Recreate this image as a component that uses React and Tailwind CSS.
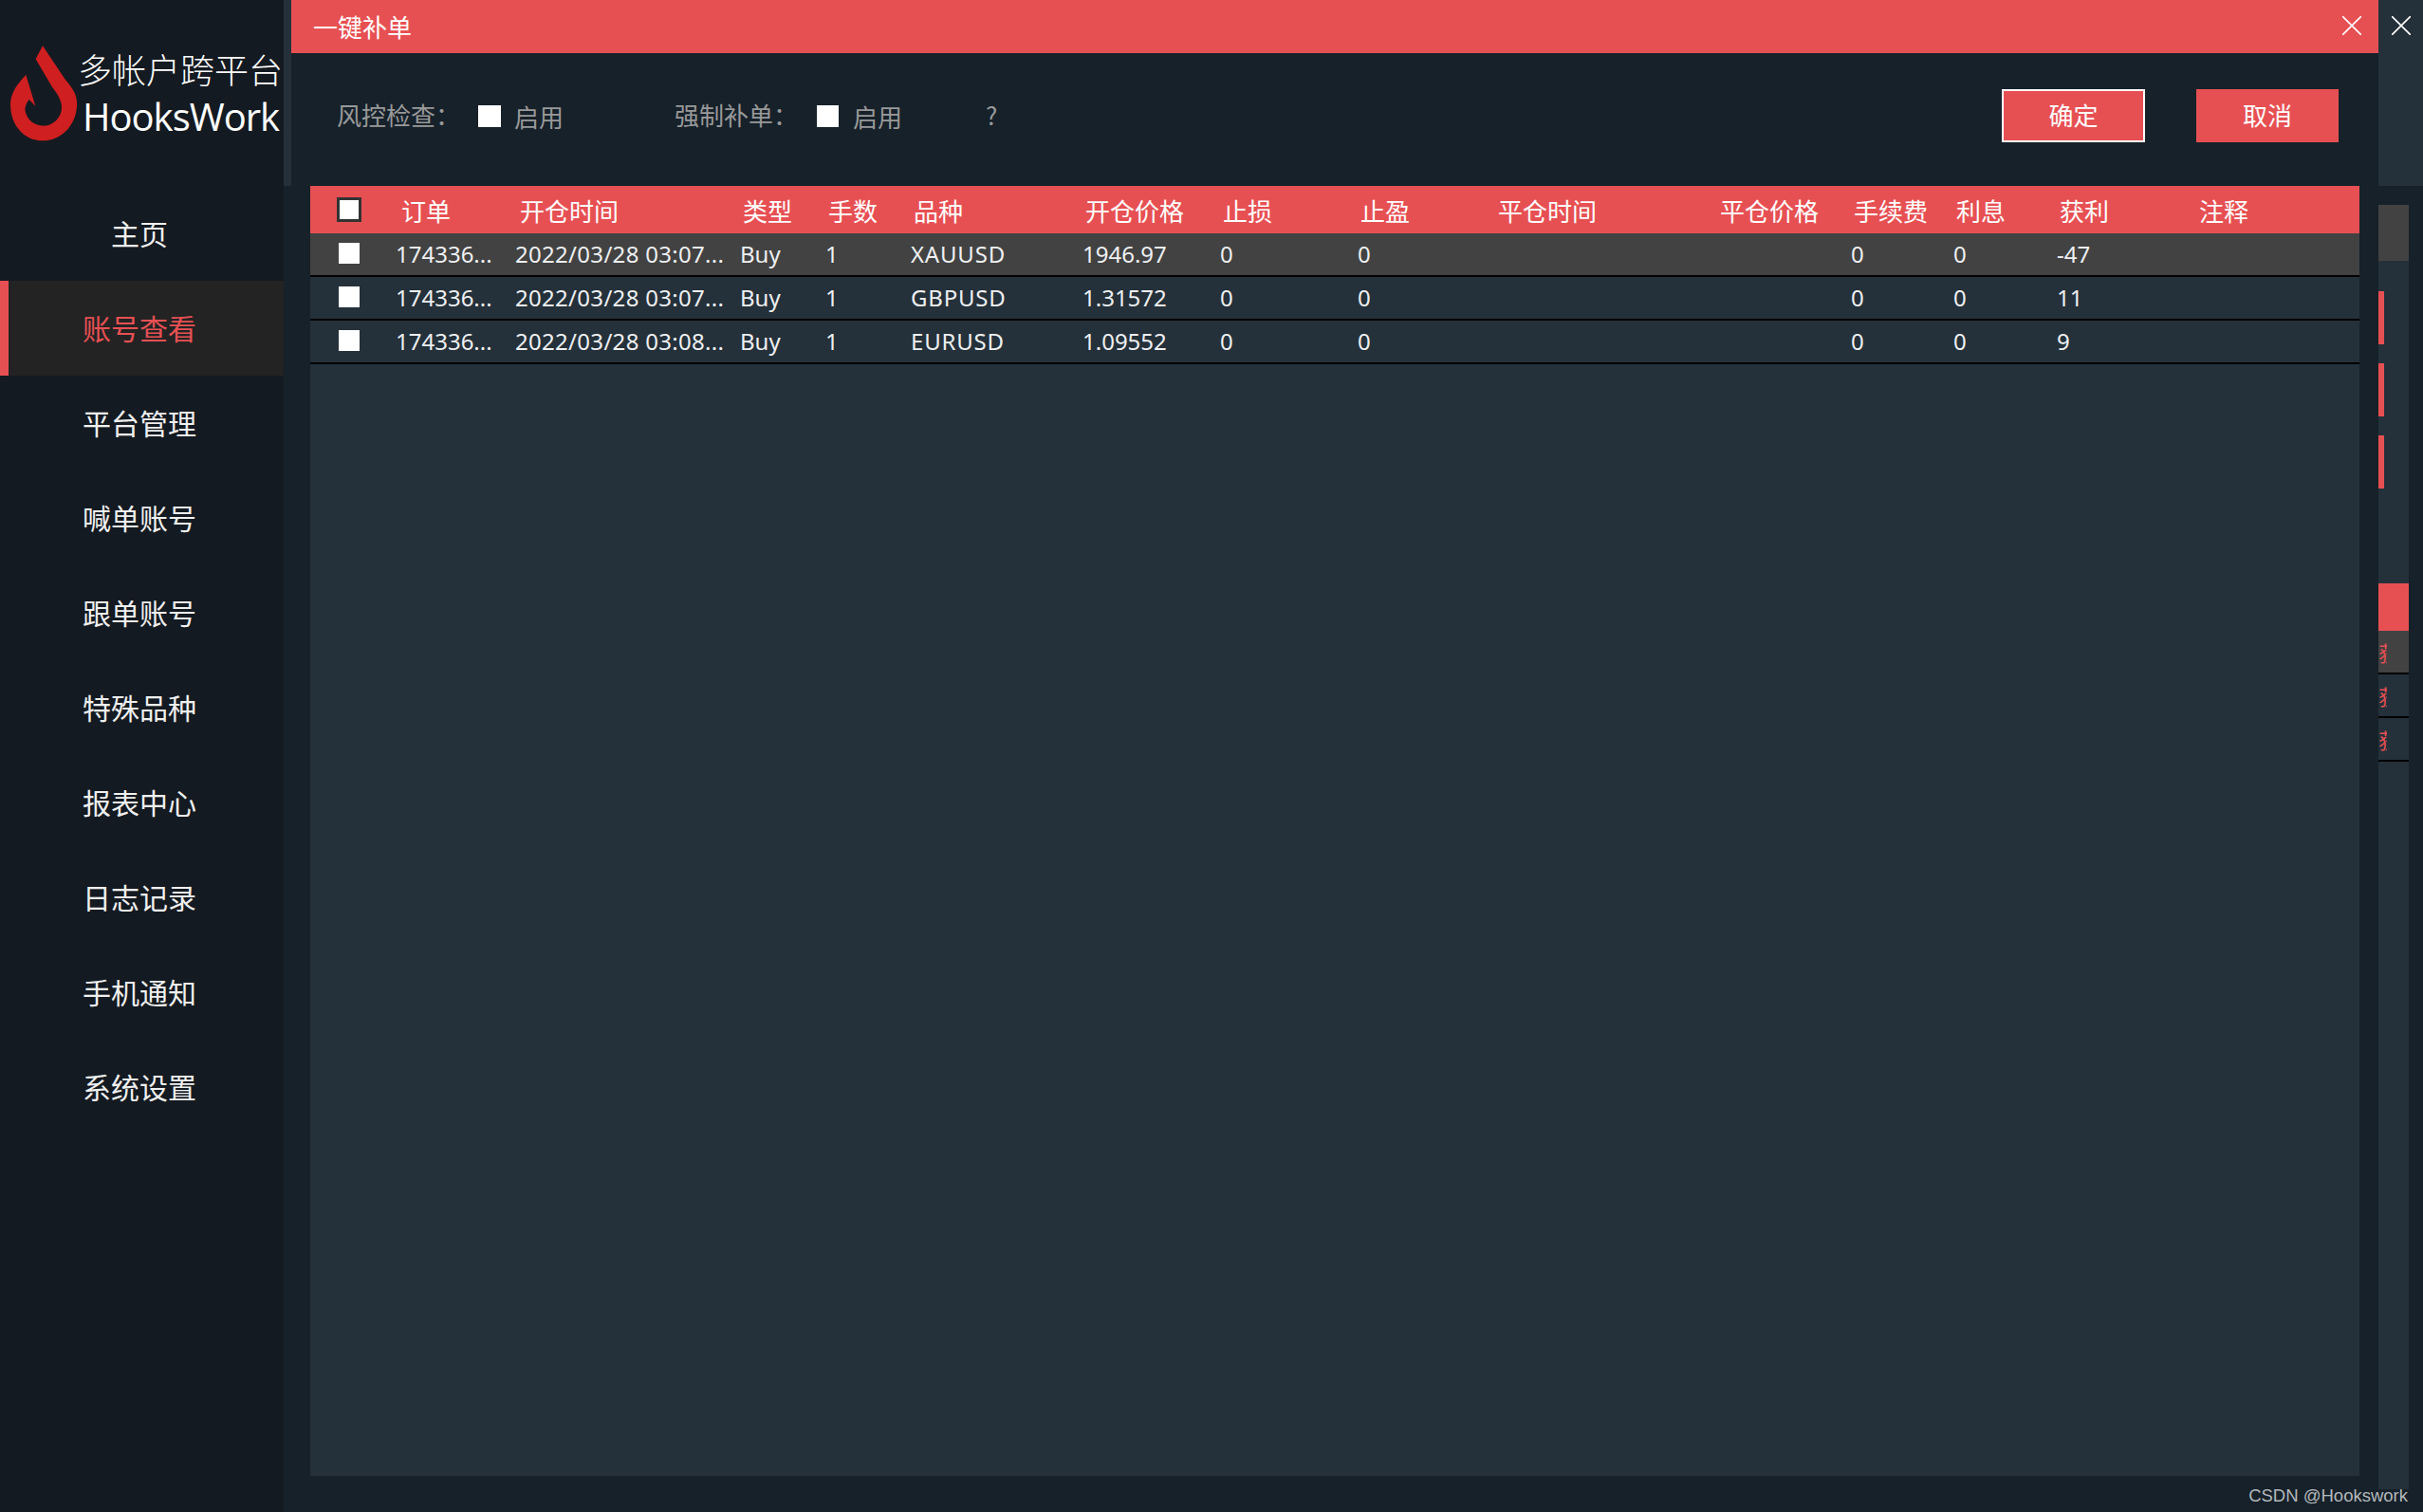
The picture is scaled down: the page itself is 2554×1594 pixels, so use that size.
const COLS = "grid-cols-[85px_128px_235px_90px_90px_181px_145px_145px_145px_234px_141px_108px_109px_147px_177px]";
const HEAD = ["订单","开仓时间","类型","手数","品种","开仓价格","止损","止盈","平仓时间","平仓价格","手续费","利息","获利","注释"];
const ROWS = [
  ["174336...","2022/03/28 03:07...","Buy","1","XAUUSD","1946.97","0","0","","","0","0","-47",""],
  ["174336...","2022/03/28 03:07...","Buy","1","GBPUSD","1.31572","0","0","","","0","0","11",""],
  ["174336...","2022/03/28 03:08...","Buy","1","EURUSD","1.09552","0","0","","","0","0","9",""],
];
const NAV = ["主页","账号查看","平台管理","喊单账号","跟单账号","特殊品种","报表中心","日志记录","手机通知","系统设置"];

function Close() {
  return (
    <svg width="20" height="20" viewBox="0 0 20 20" fill="none" stroke="#fff" strokeWidth="1.6">
      <path d="M0 0 L20 20 M20 0 L0 20" />
    </svg>
  );
}

function Box({ className }) {
  return <span className={"block bg-white " + className} />;
}

function Logo() {
  return (
    <svg width="90" height="110" viewBox="0 0 270 330" className="shrink-0">
      <path fill="#d01f20" d="M135 10 L205 115 C235 150 245 170 243 200 C240 265 190 310 135 310 C75 310 33 260 33 195 C33 160 55 130 82 102 L112 200 L92 180 C80 195 78 210 80 217 C85 245 110 263 138 263 C170 263 195 235 195 205 C195 180 180 160 165 140 L113 52 Z" />
    </svg>
  );
}

function cellClass(j) {
  if (j === 1) return "pl-[3px] whitespace-nowrap tracking-[0.3px]";
  if (j === 4) return "pl-[5px] whitespace-nowrap tracking-[0.8px]";
  return "pl-[5px] whitespace-nowrap";
}

export default function App() {
  return (
    <div className="flex w-[2554px] h-[1594px] relative overflow-hidden bg-[#16212a] text-[26px] font-['Noto_Sans','Noto_Sans_CJK_SC',sans-serif]">
      <aside className="w-[299px] h-full bg-[#141a21] shrink-0">
        <div className="h-[197px] relative">
          <div className="absolute left-0 top-[45px]"><Logo /></div>
          <div className="pl-[82px] pt-[47px] flex flex-col text-white">
            <span className="text-[36px] leading-[50px] h-[50px] whitespace-nowrap font-['Noto_Sans_CJK_SC',sans-serif] font-light">多帐户跨平台</span>
            <span className="text-[40px] leading-[52px] h-[52px] ml-[5px] whitespace-nowrap font-['Open_Sans',sans-serif] tracking-[-1px]">HooksWork</span>
          </div>
        </div>
        <nav className="flex flex-col -mt-[1px]">
          {NAV.map((n, i) => (
            <div
              key={n}
              className={
                i === 1
                  ? "h-[100px] flex items-center justify-center pr-[14px] text-[30px] bg-[#232323] text-[#e75053] border-l-[9px] border-[#e75053] font-['Noto_Sans_CJK_SC',sans-serif]"
                  : "h-[100px] flex items-center justify-center pr-[5px] text-[30px] text-[#f0f0f0] font-['Noto_Sans_CJK_SC',sans-serif]"
              }
            >
              <span className="-mt-[2px]">{n}</span>
            </div>
          ))}
        </nav>
      </aside>

      <div className="w-[8px] h-[196px] bg-[#25313a] shrink-0" />

      <main className="w-[2200px] h-full flex flex-col shrink-0">
        <header className="h-[56px] bg-[#e75053] flex items-center justify-between pl-[23px] pr-[18px] pb-[2px] text-white">
          <span className="font-['Noto_Sans_CJK_SC',sans-serif]">一键补单</span>
          <Close />
        </header>
        <div className="h-[140px] flex items-center pl-[48px] pr-[42px] pb-[8px] text-[#999] font-['Noto_Sans_CJK_SC',sans-serif]">
          <span className="w-[149px] whitespace-nowrap -mt-[3px]">风控检查：</span>
          <Box className="w-[24px] h-[23px]" />
          <span className="ml-[14px] w-[169px]">启用</span>
          <span className="w-[150px] whitespace-nowrap -mt-[3px]">强制补单：</span>
          <Box className="w-[23px] h-[23px]" />
          <span className="ml-[15px] w-[141px]">启用</span>
          <span className="-mt-[3px] -ml-[1px]">?</span>
          <button className="ml-auto w-[151px] h-[56px] pb-[3px] bg-[#e75053] border-2 border-white text-white">确定</button>
          <button className="ml-[54px] w-[150px] h-[56px] pb-[3px] bg-[#e75053] text-white">取消</button>
        </div>
        <section className="ml-[20px] w-[2160px] h-[1360px] bg-[#25313a]">
          <div className={"grid h-[50px] items-center bg-[#e75053] text-[#fff] " + COLS}>
            <span className="pl-[28px]"><span className="block w-[26px] h-[26px] bg-white border-[3px] border-[#333]" /></span>
            {HEAD.map((h, j) => (
              <span key={h} className={(j === 0 ? "pl-[11px]" : "pl-[8px]") + " whitespace-nowrap font-['Noto_Sans_CJK_SC',sans-serif]"}>{h}</span>
            ))}
          </div>
          {ROWS.map((r, i) => (
            <div key={i} className={"grid h-[46px] items-center border-b-2 border-black text-[#eef0f2] text-[24px] " + COLS + (i === 0 ? " bg-[#424242]" : "")}>
              <span className="pl-[30px] -mt-[2px]"><Box className="w-[22px] h-[22px]" /></span>
              {r.map((c, j) => (
                <span key={j} className={cellClass(j)}>{c}</span>
              ))}
            </div>
          ))}
        </section>
      </main>

      <div className="flex-1 h-full flex flex-col">
        <div className="h-[196px] bg-[#25313a] flex justify-center pt-[17px] shrink-0"><Close /></div>
        <div className="mt-[20px] w-[32px] h-[1354px] bg-[#25313a]">
          <div className="h-[59px] bg-[#424242]" />
          <div className="flex flex-col gap-[20px] pt-[32px]">
            <span className="block w-[6px] h-[56px] bg-[#e75053]" />
            <span className="block w-[6px] h-[56px] bg-[#e75053]" />
            <span className="block w-[6px] h-[56px] bg-[#e75053]" />
          </div>
          <div className="h-[50px] mt-[100px] bg-[#e75053]" />
          {[0, 1, 2].map((i) => (
            <div key={i} className={"h-[46px] border-b-2 border-black flex items-center " + (i === 0 ? "bg-[#424242]" : "")}>
              <span className="block w-[9px] overflow-hidden whitespace-nowrap text-[#e75053] text-[22px] leading-[30px] font-['Noto_Sans_CJK_SC',sans-serif]">获利</span>
            </div>
          ))}
        </div>
      </div>

      <span className="absolute right-[16px] bottom-[6px] text-[18.5px] leading-[22px] text-[#b4b8bb] font-['Liberation_Sans',sans-serif]">CSDN @Hookswork</span>
    </div>
  );
}
